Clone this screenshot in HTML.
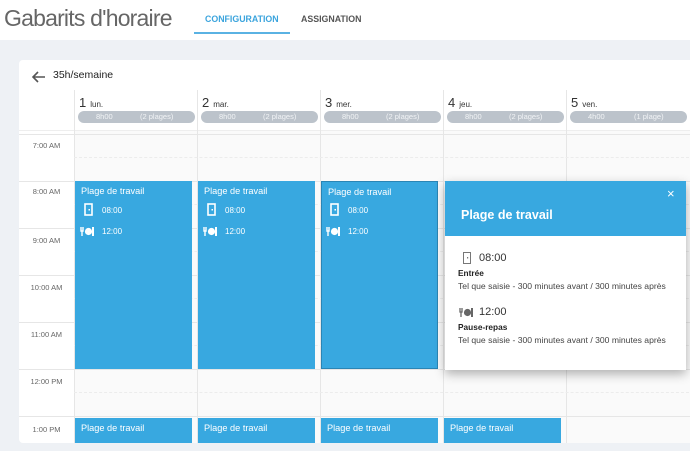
<!DOCTYPE html>
<html><head><meta charset="utf-8"><style>
*{margin:0;padding:0;box-sizing:border-box}
body{width:690px;height:451px;overflow:hidden;background:#eef1f5;font-family:"Liberation Sans",sans-serif;position:relative}
.hdr{position:absolute;left:0;top:0;width:690px;height:40px;background:#fff}
.title{position:absolute;left:4px;top:5px;font-size:23px;color:#666;letter-spacing:-0.8px}
.tab{position:absolute;top:14px;font-size:8.8px;font-weight:bold;letter-spacing:0}
.card{position:absolute;left:19px;top:60px;width:680px;height:383px;background:#fff;border-radius:4px;overflow:hidden}
.abs{position:absolute}
.day{position:absolute;top:35px;font-size:13px;color:#333}
.day small{font-size:8px;margin-left:4px}
.pill{position:absolute;top:51px;height:12px;width:117px;background:#bcc3cb;border-radius:6px;color:#f2f4f6;font-size:7.5px;line-height:12px}
.pill span{position:absolute}
.grid{position:absolute;left:55px;top:70px;width:640px;height:320px;background:#fafafa}
.hl{position:absolute;left:0;width:680px;height:1px;background:#e6e6e6}
.dl{position:absolute;left:55px;width:625px;height:0;border-top:1px dashed #ececec}
.vl{position:absolute;top:30px;width:1px;height:360px;background:#e6e6e6}
.tl{position:absolute;left:0;width:55px;text-align:center;font-size:7.5px;color:#666}
.blk{position:absolute;width:117px;background:#38a8e0;color:#fff;font-size:9.2px}
.blk .t{position:absolute;left:6px;top:5px}
.row{position:absolute;left:6px;font-size:8px}
.pop{position:absolute;left:445px;top:181px;width:241px;height:189px;background:#fff;box-shadow:0 4px 10px rgba(0,0,0,.3)}
.d{font-size:8.6px;color:#444}
</style></head><body>
<div class="hdr">
<div class="title">Gabarits d'horaire</div>
<div class="tab" style="left:205px;color:#3ba4dd">CONFIGURATION</div>
<div class="tab" style="left:301px;color:#555">ASSIGNATION</div>
<div class="abs" style="left:194px;top:32px;width:96px;height:2px;background:#5ab2e3"></div>
</div>
<div class="card">
<svg class="abs" style="left:13px;top:11px" width="14" height="12" viewBox="0 0 14 12"><path d="M13 6H2M6 1L1 6l5 5" stroke="#555" stroke-width="1.6" fill="none"/></svg>
<div class="abs" style="left:34px;top:9px;font-size:10.5px;color:#222">35h/semaine</div>
<div class="grid"></div>
<div class="hl" style="top:70px;background:#eee"></div>
<div class="vl" style="left:55px"></div>
<div class="vl" style="left:178px"></div>
<div class="vl" style="left:301px"></div>
<div class="vl" style="left:424px"></div>
<div class="vl" style="left:547px"></div>
<div class="hl" style="top:74px"></div>
<div class="dl" style="top:97px"></div>
<div class="hl" style="top:121px"></div>
<div class="dl" style="top:144px"></div>
<div class="hl" style="top:168px"></div>
<div class="dl" style="top:191px"></div>
<div class="hl" style="top:215px"></div>
<div class="dl" style="top:238px"></div>
<div class="hl" style="top:262px"></div>
<div class="dl" style="top:285px"></div>
<div class="hl" style="top:309px"></div>
<div class="dl" style="top:332px"></div>
<div class="hl" style="top:356px"></div>
<div class="tl" style="top:81px">7:00 AM</div>
<div class="tl" style="top:127px">8:00 AM</div>
<div class="tl" style="top:176px">9:00 AM</div>
<div class="tl" style="top:223px">10:00 AM</div>
<div class="tl" style="top:270px">11:00 AM</div>
<div class="tl" style="top:317px">12:00 PM</div>
<div class="tl" style="top:365px">1:00 PM</div>
<div class="day" style="left:60px">1<small>lun.</small></div>
<div class="day" style="left:183px">2<small>mar.</small></div>
<div class="day" style="left:306px">3<small>mer.</small></div>
<div class="day" style="left:429px">4<small>jeu.</small></div>
<div class="day" style="left:552px">5<small>ven.</small></div>
<div class="pill" style="left:59px"><span style="left:18px">8h00</span><span style="left:62px">(2 plages)</span></div>
<div class="pill" style="left:182px"><span style="left:18px">8h00</span><span style="left:62px">(2 plages)</span></div>
<div class="pill" style="left:305px"><span style="left:18px">8h00</span><span style="left:62px">(2 plages)</span></div>
<div class="pill" style="left:428px"><span style="left:18px">8h00</span><span style="left:62px">(2 plages)</span></div>
<div class="pill" style="left:551px"><span style="left:18px">4h00</span><span style="left:64px">(1 plage)</span></div>
</div>

<div class="blk" style="left:75px;top:181px;height:188px"><div class="t">Plage de travail</div>
<svg class="abs" style="left:9px;top:22px" width="9" height="13"><rect x="1" y="1" width="7" height="11" stroke="#fff" stroke-width="1.6" fill="none"/><rect x="4.5" y="6" width="1.5" height="1.5" fill="#fff"/></svg><div class="row" style="left:27px;top:25px">08:00</div>
<svg class="abs" style="left:5px;top:45px" width="16" height="10"><path d="M1 1v4h2V1M2 5v5" stroke="#fff" stroke-width="1.4" fill="none"/><circle cx="8.5" cy="5.5" r="3.6" fill="#fff"/><path d="M13 1v9" stroke="#fff" stroke-width="2"/></svg><div class="row" style="left:27px;top:46px">12:00</div></div>
<div class="blk" style="left:198px;top:181px;height:188px"><div class="t">Plage de travail</div>
<svg class="abs" style="left:9px;top:22px" width="9" height="13"><rect x="1" y="1" width="7" height="11" stroke="#fff" stroke-width="1.6" fill="none"/><rect x="4.5" y="6" width="1.5" height="1.5" fill="#fff"/></svg><div class="row" style="left:27px;top:25px">08:00</div>
<svg class="abs" style="left:5px;top:45px" width="16" height="10"><path d="M1 1v4h2V1M2 5v5" stroke="#fff" stroke-width="1.4" fill="none"/><circle cx="8.5" cy="5.5" r="3.6" fill="#fff"/><path d="M13 1v9" stroke="#fff" stroke-width="2"/></svg><div class="row" style="left:27px;top:46px">12:00</div></div>
<div class="blk" style="left:321px;top:181px;height:188px;border:1px solid #2a85b5"><div class="t">Plage de travail</div>
<svg class="abs" style="left:8px;top:21px" width="9" height="13"><rect x="1" y="1" width="7" height="11" stroke="#fff" stroke-width="1.6" fill="none"/><rect x="4.5" y="6" width="1.5" height="1.5" fill="#fff"/></svg><div class="row" style="left:26px;top:24px">08:00</div>
<svg class="abs" style="left:4px;top:44px" width="16" height="10"><path d="M1 1v4h2V1M2 5v5" stroke="#fff" stroke-width="1.4" fill="none"/><circle cx="8.5" cy="5.5" r="3.6" fill="#fff"/><path d="M13 1v9" stroke="#fff" stroke-width="2"/></svg><div class="row" style="left:26px;top:45px">12:00</div></div>
<div class="blk" style="left:75px;top:418px;height:25px"><div class="t">Plage de travail</div></div>
<div class="blk" style="left:198px;top:418px;height:25px"><div class="t">Plage de travail</div></div>
<div class="blk" style="left:321px;top:418px;height:25px"><div class="t">Plage de travail</div></div>
<div class="blk" style="left:444px;top:418px;height:25px"><div class="t">Plage de travail</div></div>

<div class="pop">
<div class="abs" style="left:0;top:0;width:241px;height:55px;background:#38a8e0"></div>
<div class="abs" style="left:222px;top:5px;color:#fff;font-size:13px">×</div>
<div class="abs" style="left:16px;top:27px;color:#fff;font-size:12.5px;font-weight:bold">Plage de travail</div>
<svg class="abs" style="left:18px;top:71px" width="8" height="12"><rect x="0.5" y="0.5" width="7" height="11" stroke="#777" fill="none"/><rect x="4" y="5" width="1.2" height="1.5" fill="#777"/></svg>
<div class="abs" style="left:34px;top:71px;font-size:11px;color:#333">08:00</div>
<div class="abs" style="left:13px;top:87px;font-size:8.3px;font-weight:bold;color:#222">Entrée</div>
<div class="abs d" style="left:13px;top:100px">Tel que saisie - 300 minutes avant / 300 minutes après</div>
<svg class="abs" style="left:14px;top:126px" width="16" height="10"><path d="M1 1v4h2V1M2 5v5" stroke="#666" stroke-width="1.3" fill="none"/><circle cx="8.5" cy="5.5" r="3.6" fill="#666"/><path d="M13 1v9" stroke="#666" stroke-width="2"/></svg>
<div class="abs" style="left:34px;top:125px;font-size:11px;color:#333">12:00</div>
<div class="abs" style="left:13px;top:141px;font-size:8.3px;font-weight:bold;color:#222">Pause-repas</div>
<div class="abs d" style="left:13px;top:154px">Tel que saisie - 300 minutes avant / 300 minutes après</div>
</div>
</body></html>
